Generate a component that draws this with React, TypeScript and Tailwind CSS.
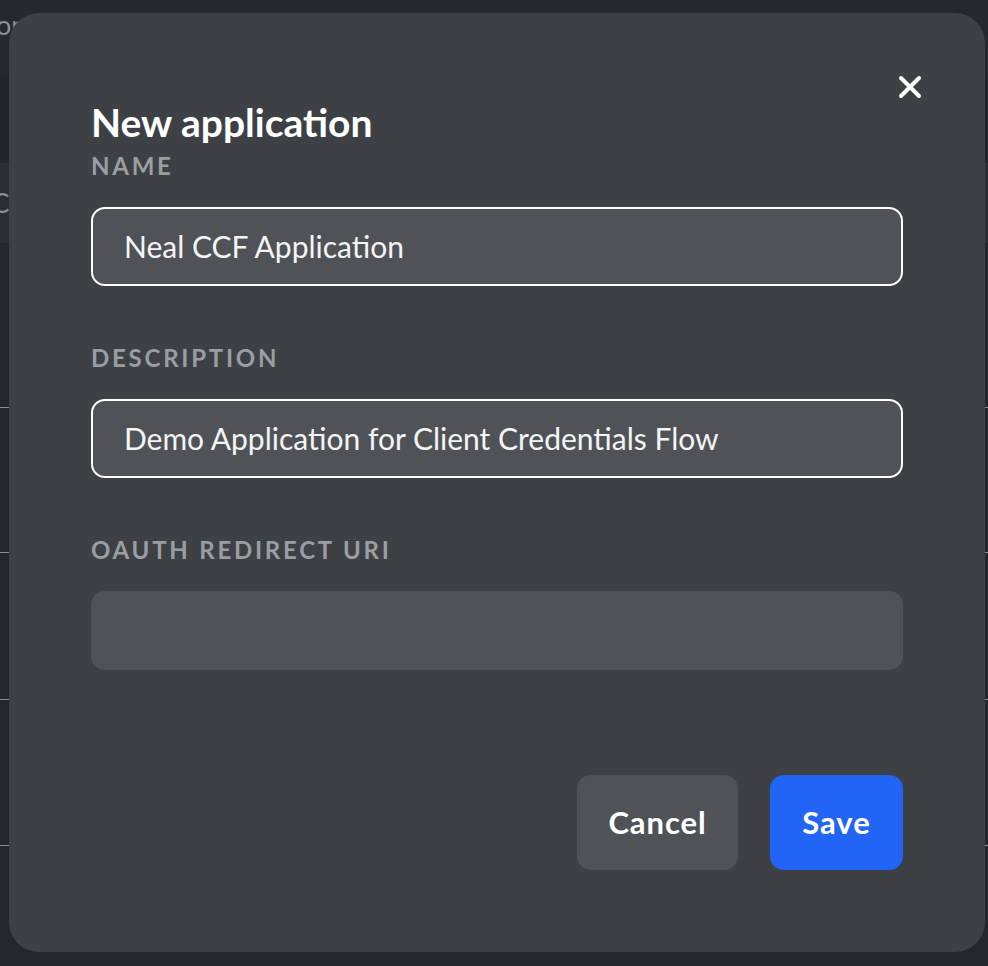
import { X } from 'lucide-react';

const font = { fontFamily: 'Lato, "Noto Sans", sans-serif' };

// Dimmed page behind the dialog: a table header and row separators peek out at the edges
const Backdrop = () => (
  <div className="flex h-[966px] w-[988px] flex-col bg-[#23262a] text-[#8d9196]">
    <div className="flex h-[73px] items-start bg-[#25282c] pt-[10px] text-[27px] leading-[30px]">
      <span className="-ml-[4px]">or</span>
    </div>
    <div className="h-[90px] bg-[#222529]" />
    <div className="flex h-[80px] items-center bg-[#2a2d31] text-[26px]">
      <span className="-ml-[8px]">C</span>
    </div>
    <div className="h-[164px]" />
    <div className="h-[1px] bg-[#8d9196]" />
    <div className="h-[144px]" />
    <div className="h-[1px] bg-[#8d9196]" />
    <div className="h-[146px]" />
    <div className="h-[1px] bg-[#8d9196]" />
    <div className="h-[145px]" />
    <div className="h-[1px] bg-[#8d9196]" />
  </div>
);

const Field = ({ label, value, bordered }: { label: string; value?: string; bordered?: boolean }) => (
  <div className="flex flex-col">
    <label className="text-[24px] leading-[28px] font-bold tracking-[0.115em] text-[#9a9ea3]">{label}</label>
    <div
      className={`mt-[27px] flex h-[79px] items-center rounded-[14px] bg-[#4f5357] px-[31px] text-[30px] text-[#f4f4f4] ${
        bordered ? 'border-2 border-white' : ''
      }`}
    >
      {value}
    </div>
  </div>
);

export default function App() {
  return (
    <div className="relative h-[966px] w-[988px] overflow-hidden" style={font}>
      <Backdrop />
      <div className="absolute left-[9px] top-[13px] flex h-[939px] w-[976px] flex-col rounded-[30px] bg-[#3d4145] px-[82px] pt-[89px]">
        <button className="absolute right-[57px] top-[56px] text-white">
          <X size={36} strokeWidth={2.6} />
        </button>
        <h2 className="text-[39px] leading-[40px] font-bold text-white">New application</h2>
        <div className="mt-[10px] flex flex-col gap-[58px]">
          <Field label="NAME" value="Neal CCF Application" bordered />
          <Field label="DESCRIPTION" value="Demo Application for Client Credentials Flow" bordered />
          <Field label="OAUTH REDIRECT URI" />
        </div>
        <div className="mt-[105px] flex justify-end gap-[32px]">
          <button className="h-[95px] w-[161px] rounded-[14px] bg-[#4f5357] text-[31px] font-bold tracking-[0.03em] text-white">
            Cancel
          </button>
          <button className="h-[95px] w-[133px] rounded-[14px] bg-[#2264f6] text-[31px] font-bold tracking-[0.03em] text-white">
            Save
          </button>
        </div>
      </div>
    </div>
  );
}
